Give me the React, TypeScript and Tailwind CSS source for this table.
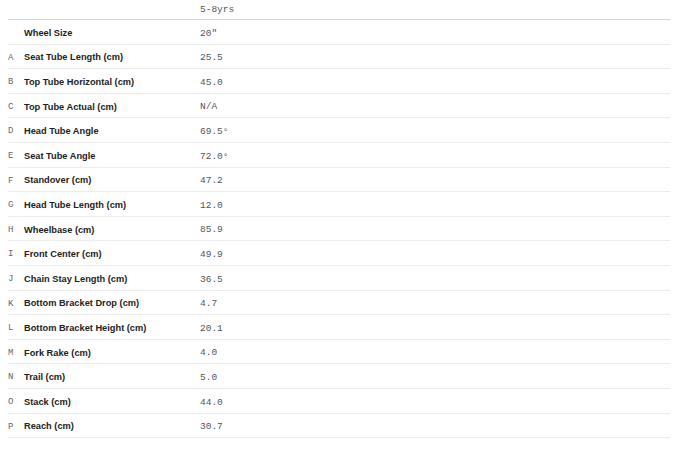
import React from "react";

const rows: [string, string, string][] = [
  ["", "Wheel Size", "20\""],
  ["A", "Seat Tube Length (cm)", "25.5"],
  ["B", "Top Tube Horizontal (cm)", "45.0"],
  ["C", "Top Tube Actual (cm)", "N/A"],
  ["D", "Head Tube Angle", "69.5°"],
  ["E", "Seat Tube Angle", "72.0°"],
  ["F", "Standover (cm)", "47.2"],
  ["G", "Head Tube Length (cm)", "12.0"],
  ["H", "Wheelbase (cm)", "85.9"],
  ["I", "Front Center (cm)", "49.9"],
  ["J", "Chain Stay Length (cm)", "36.5"],
  ["K", "Bottom Bracket Drop (cm)", "4.7"],
  ["L", "Bottom Bracket Height (cm)", "20.1"],
  ["M", "Fork Rake (cm)", "4.0"],
  ["N", "Trail (cm)", "5.0"],
  ["O", "Stack (cm)", "44.0"],
  ["P", "Reach (cm)", "30.7"],
];

export default function App() {
  return (
    <div className="w-[684px] h-[449px] bg-white pl-2 pr-[14px]">
      <div className="flex items-center h-[20px] pt-[1px] border-b border-[#d4d4d4]">
        <div className="w-[192px]" />
        <div className="text-[9.5px] text-[#555] font-['Liberation_Mono',monospace]">5-8yrs</div>
      </div>
      {rows.map(([l, n, v], i) => (
        <div key={i} className="flex items-center h-[24.6px] pt-[4px] border-b border-[#ececec]">
          <div className="w-[16px] text-[9px] text-[#666] font-['Liberation_Mono',monospace]">{l}</div>
          <div className="w-[176px] text-[9.25px] font-bold text-[#222] font-['Liberation_Sans',sans-serif]">{n}</div>
          <div className="text-[9.5px] text-[#555] font-['Liberation_Mono',monospace]">{v}</div>
        </div>
      ))}
    </div>
  );
}
